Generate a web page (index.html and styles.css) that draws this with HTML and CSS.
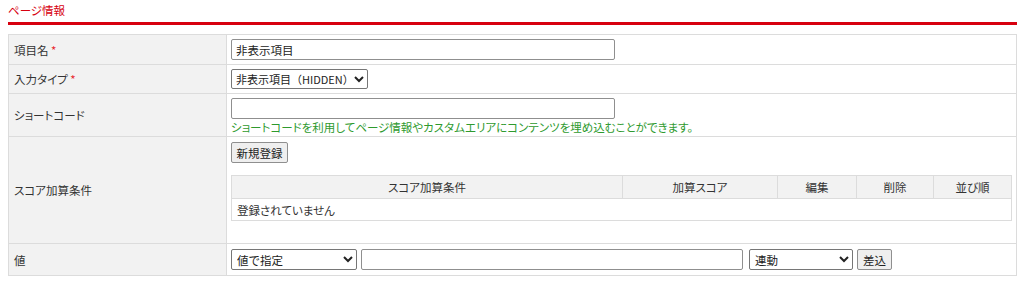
FILE: index.html
```html
<!DOCTYPE html>
<html lang="ja">

<head>
    <meta charset="utf-8">
    <title>ページ情報</title>
    <link rel="stylesheet" href="styles.css">
</head>

<body>
    <h2 class="section-title">ページ情報</h2>
    <table class="form-table">
        <tr class="row-name">
            <th>項目名 <span class="req">*</span></th>
            <td><input class="text-input wide" type="text" value="非表示項目"></td>
        </tr>
        <tr class="row-type">
            <th>入力タイプ <span class="req">*</span></th>
            <td>
                <select class="select-input type-select">
                    <option>非表示項目（HIDDEN）</option>
                </select>
            </td>
        </tr>
        <tr class="row-code">
            <th>ショートコード</th>
            <td>
                <input class="text-input wide" type="text">
                <div class="help">ショートコードを利用してページ情報やカスタムエリアにコンテンツを埋め込むことができます。</div>
            </td>
        </tr>
        <tr class="row-score">
            <th>スコア加算条件</th>
            <td>
                <button class="btn new-btn">新規登録</button>
                <table class="list-table">
                    <tr>
                        <th class="col-cond">スコア加算条件</th>
                        <th class="col-score">加算スコア</th>
                        <th class="col-edit">編集</th>
                        <th class="col-del">削除</th>
                        <th class="col-order">並び順</th>
                    </tr>
                    <tr>
                        <td colspan="5">登録されていません</td>
                    </tr>
                </table>
            </td>
        </tr>
        <tr class="row-value">
            <th>値</th>
            <td>
                <div class="value-line">
                    <select class="select-input value-select">
                        <option>値で指定</option>
                    </select>
                    <input class="text-input value-text" type="text">
                    <select class="select-input link-select">
                        <option>連動</option>
                    </select>
                    <button class="btn insert-btn">差込</button>
                </div>
            </td>
        </tr>
    </table>
</body>

</html>
```

FILE: styles.css
```css
html {
    font-family: "Noto Sans CJK JP", "Noto Sans", sans-serif;
    font-size: 11.5px;
    font-feature-settings: "palt";
    line-height: 16px;
    color: #333333;
}

body {
    margin: 0;
    padding: 0 7px 0 8px;
    background-color: white;
}

.section-title {
    margin: 0;
    padding: 2px 0 0 0;
    height: 20px;
    font-size: 11.5px;
    font-weight: normal;
    line-height: 16px;
    color: #d7000f;
    border-bottom: 3px solid #d7000f;
}

.form-table {
    width: 100%;
    margin-top: 9px;
    border-collapse: collapse;
    border: 1px solid #dcdcdc;
}

.form-table > tbody > tr > th {
    width: 209px;
    padding: 0 4px 0 5px;
    text-align: left;
    font-weight: normal;
    background-color: #f2f2f2;
    border: 1px solid #dcdcdc;
    vertical-align: middle;
}

.form-table > tbody > tr > td {
    padding: 4px 4px;
    border: 1px solid #dcdcdc;
    vertical-align: middle;
}

.req {
    color: #e8272e;
}

.text-input {
    box-sizing: border-box;
    height: 21px;
    margin: 0;
    padding: 1px 4px;
    border: 1px solid #8f8f8f;
    border-radius: 2px;
    font-family: inherit;
    font-size: 11.5px;
    color: #222222;
    display: block;
}

.wide {
    width: 384px;
}

.select-input {
    box-sizing: border-box;
    height: 20px;
    margin: 0;
    padding: 0 1px;
    border: 1px solid #767676;
    border-radius: 2px;
    background-color: white;
    font-family: inherit;
    font-size: 11.5px;
    color: #222222;
}

.type-select {
    width: 137px;
    font-size: 11px;
    padding: 0;
}

.form-table > tbody > tr.row-code > td {
    padding-bottom: 1px;
}

.help {
    color: #2e9a2e;
    line-height: 15px;
    margin-top: 1px;
}

.btn {
    box-sizing: border-box;
    height: 21px;
    margin: 0;
    padding: 0 4px;
    border: 1px solid #8f8f8f;
    border-radius: 2px;
    background-color: #efefef;
    font-family: inherit;
    font-size: 11.5px;
    color: #222222;
    display: block;
}

.new-btn {
    width: 57px;
}

.form-table > tbody > tr.row-score > td {
    padding-top: 5px;
    padding-bottom: 22px;
}

.list-table {
    width: 781px;
    margin-top: 12px;
    border-collapse: collapse;
    border: 1px solid #dcdcdc;
}

.list-table th {
    height: 22px;
    padding: 0;
    font-weight: normal;
    text-align: center;
    background-color: #f2f2f2;
    border: 1px solid #dcdcdc;
}

.list-table td {
    height: 21px;
    padding: 0 5px;
    text-align: left;
}

.col-cond { width: 390px; }
.col-score { width: 154px; }
.col-edit { width: 78px; }
.col-del { width: 76px; }

.form-table > tbody > tr.row-value > td {
    padding-top: 5px;
    padding-bottom: 5px;
}

.value-line {
    display: flex;
    align-items: center;
    gap: 4px;
}

.value-select {
    width: 126px;
    height: 21px;
}

.value-text {
    width: 382px;
}

.link-select {
    width: 104px;
    height: 21px;
    margin-left: 2px;
}

.insert-btn {
    width: 35px;
}
```
